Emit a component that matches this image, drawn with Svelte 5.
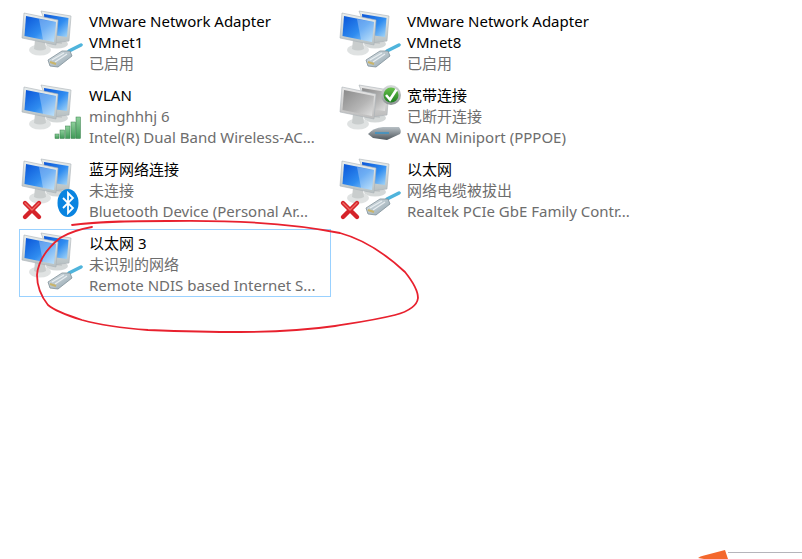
<script>
  const items = [
    { lines: ['VMware Network Adapter', 'VMnet1', '已启用'], titleLines: 2, badge: 'plug' },
    { lines: ['VMware Network Adapter', 'VMnet8', '已启用'], titleLines: 2, badge: 'plug' },
    { lines: ['WLAN', 'minghhhj 6', 'Intel(R) Dual Band Wireless-AC...'], titleLines: 1, badge: 'signal' },
    { lines: ['宽带连接', '已断开连接', 'WAN Miniport (PPPOE)'], titleLines: 1, badge: 'modem', grey: true },
    { lines: ['蓝牙网络连接', '未连接', 'Bluetooth Device (Personal Ar...'], titleLines: 1, badge: 'bluetooth', error: true },
    { lines: ['以太网', '网络电缆被拔出', 'Realtek PCIe GbE Family Contr...'], titleLines: 1, badge: 'plug', error: true },
    { lines: ['以太网 3', '未识别的网络', 'Remote NDIS based Internet S...'], titleLines: 1, badge: 'plug', selected: true }
  ];
</script>

{#snippet monitor(points, screen, grey)}
  <path d={points} fill={grey ? 'url(#bezelGrey)' : 'url(#bezel)'} stroke="#a9b0b5" stroke-width="0.6" />
  <path d={screen} fill={grey ? 'url(#screenGrey)' : 'url(#screen)'} />
{/snippet}

{#snippet icon(item)}
  <svg class="icon" viewBox="0 0 70 68" width="70" height="68" aria-hidden="true">
    <ellipse cx="38" cy="37" rx="11" ry="4.5" fill="#d4d8d8" />
    <path d="M33 30 L42 32 L43 37 L33 36 Z" fill="#c3c8c8" />
    {@render monitor('M22 4 L52 9 L50 34 L34 36 Z', 'M25 7 L49.5 11 L48 30 L26 27 Z', item.grey)}
    <ellipse cx="21" cy="43" rx="11" ry="5.5" fill="#dfe2e2" />
    <path d="M16 33 L26 35 L27 42 Q21 45 15 42 Z" fill="#c9cdcd" />
    {@render monitor('M5 6 L39 13 L37 38 L3 31 Z', 'M7 9 L37 15 L35 35 L5.5 29 Z', item.grey)}
    {#if !item.grey}
      <path d="M20 12 L37 15 L35 35 L24 33 Z" fill="#ffffff" opacity="0.3" />
    {/if}

    {#if item.badge === 'plug'}
      <path d="M50 44 L62 38" stroke="#4fb4dc" stroke-width="3.5" stroke-linecap="round" />
      <path d="M29 53 L43 44 L51 44 L53 49 L39 60 L31 59 Z" fill="url(#plug)" stroke="#7f8f98" stroke-width="0.8" />
      <path d="M33 53 L45 46 M36 55 L48 47" stroke="#e8eef1" stroke-width="1.2" />
      <path d="M31 55 L37 57" stroke="#c9b46a" stroke-width="2" />
    {:else if item.badge === 'signal'}
      <g fill="url(#bars)" stroke="#3b7f4c" stroke-width="0.5">
        <rect x="36" y="53" width="4" height="4.5" />
        <rect x="41" y="49" width="4.5" height="8.5" />
        <rect x="46.5" y="45" width="4.5" height="12.5" />
        <rect x="52" y="41" width="4.5" height="16.5" />
        <rect x="57" y="36" width="4.5" height="21.5" />
      </g>
    {:else if item.badge === 'modem'}
      <path d="M31 53 Q36 47 46 46 L62 46 Q65 50 63 53 L50 59 L36 57 Z" fill="url(#modem)" />
      <path d="M38 52 L52 52" stroke="#3e93c4" stroke-width="1.6" />
      <circle cx="54" cy="14" r="10" fill="url(#checkRing)" />
      <circle cx="54" cy="14" r="7.5" fill="url(#checkFill)" />
      <path d="M49 14 L53 18.5 L59.5 8.5" fill="none" stroke="#ffffff" stroke-width="2.6" />
    {:else if item.badge === 'bluetooth'}
      <ellipse cx="49" cy="48" rx="10.5" ry="14" fill="#0a84e0" />
      <path d="M44 43 L54 53 L49 58 L49 38 L54 43 L44 53" fill="none" stroke="#ffffff" stroke-width="1.8" />
    {/if}

    {#if item.error}
      <path d="M6 48 L20 62 M20 48 L6 62" stroke="#d5232a" stroke-width="4.4" stroke-linecap="round" />
      <path d="M6 48 L13 55 M20 48 L13 55" stroke="#ee6a64" stroke-width="1.4" stroke-linecap="round" />
    {/if}
  </svg>
{/snippet}

<div class="page">
  <svg class="defs" width="0" height="0" aria-hidden="true">
    <defs>
      <linearGradient id="screen" x1="0" y1="0" x2="1" y2="1">
        <stop offset="0" stop-color="#0a55d8" />
        <stop offset="0.55" stop-color="#2f8cf0" />
        <stop offset="1" stop-color="#a8d8f8" />
      </linearGradient>
      <linearGradient id="screenGrey" x1="0" y1="0" x2="1" y2="1">
        <stop offset="0" stop-color="#8a8a8a" />
        <stop offset="0.6" stop-color="#b5b5b5" />
        <stop offset="1" stop-color="#e2e2e2" />
      </linearGradient>
      <linearGradient id="bezel" x1="0" y1="0" x2="0" y2="1">
        <stop offset="0" stop-color="#e9eeee" />
        <stop offset="1" stop-color="#b7c0c2" />
      </linearGradient>
      <linearGradient id="bezelGrey" x1="0" y1="0" x2="0" y2="1">
        <stop offset="0" stop-color="#e8e8e8" />
        <stop offset="1" stop-color="#bcbcbc" />
      </linearGradient>
      <linearGradient id="plug" x1="0" y1="0" x2="1" y2="1">
        <stop offset="0" stop-color="#dfe6ea" />
        <stop offset="1" stop-color="#8fa2ac" />
      </linearGradient>
      <linearGradient id="bars" x1="0" y1="0" x2="0" y2="1">
        <stop offset="0" stop-color="#8fd09c" />
        <stop offset="1" stop-color="#3f9a57" />
      </linearGradient>
      <linearGradient id="modem" x1="0" y1="0" x2="0" y2="1">
        <stop offset="0" stop-color="#b9c1c6" />
        <stop offset="1" stop-color="#4e565c" />
      </linearGradient>
      <linearGradient id="checkRing" x1="0" y1="0" x2="0" y2="1">
        <stop offset="0" stop-color="#d8dcdc" />
        <stop offset="1" stop-color="#8b9292" />
      </linearGradient>
      <linearGradient id="checkFill" x1="0" y1="0" x2="0" y2="1">
        <stop offset="0" stop-color="#67c14a" />
        <stop offset="1" stop-color="#1f7e22" />
      </linearGradient>
    </defs>
  </svg>

  <div class="grid">
    {#each items as item}
      <div class="tile" class:selected={item.selected}>
        {@render icon(item)}
        <div class="text">
          {#each item.lines as line, i}
            <div class="line" class:title={i < item.titleLines}>{line}</div>
          {/each}
        </div>
      </div>
    {/each}
  </div>

  <svg class="annotation" viewBox="0 0 802 559" width="802" height="559" aria-hidden="true">
    <path
      d="M72 225 C105 221 135 221 167 221 C225 220 290 223 340 233 C366 240 390 258 405 272 C413 282 418 290 418 298 C417 306 410 311 395 315 C375 320 360 322 335 326 C300 331 270 332 240 332 C205 332 175 331 148 330 C120 328 100 325 82 320 C66 315 55 311 48 305 C40 295 37 285 37 275 C38 263 45 250 60 238 C70 232 80 229 92 227"
      fill="none" stroke="#e8212e" stroke-width="1.8" stroke-linecap="round" />
  </svg>

  <div class="corner">
    <span class="rule"></span>
    <svg class="brush" viewBox="0 0 34 12" width="34" height="12" aria-hidden="true">
      <path d="M0 8 Q2 6 6 5.5 L27 0 L30 9 L6 9 Z" fill="#f4682d" />
    </svg>
  </div>
</div>

<style>
  :global(body) {
    margin: 0;
    background: #ffffff;
  }

  .page {
    position: relative;
    width: 802px;
    height: 559px;
    overflow: hidden;
    font-family: "Noto Sans", "Noto Sans CJK SC", sans-serif;
    font-size: 15px;
    color: #6d6d6d;
  }

  .defs {
    position: absolute;
  }

  .grid {
    display: grid;
    grid-template-columns: 312px 312px;
    gap: 6px;
    padding: 7px 0 0 19px;
  }

  .tile {
    display: flex;
    height: 68px;
    box-sizing: border-box;
    border: 1px solid transparent;
  }

  .tile.selected {
    border-color: #99d1ff;
  }

  .icon {
    flex: none;
    margin: -1px 0 0 -1px;
  }

  .text {
    padding-top: 3px;
    min-width: 0;
    white-space: nowrap;
  }

  .line {
    height: 21px;
    line-height: 21px;
  }

  .title {
    color: #000000;
  }

  .annotation {
    position: absolute;
    left: 0;
    top: 0;
    pointer-events: none;
  }

  .corner {
    position: absolute;
    left: 698px;
    bottom: 0;
    width: 104px;
    height: 9px;
  }

  .rule {
    position: absolute;
    left: 30px;
    right: 0;
    top: 2px;
    height: 1px;
    background: #b5b5bb;
  }

  .brush {
    position: absolute;
    left: 0;
    top: 0;
  }
</style>
